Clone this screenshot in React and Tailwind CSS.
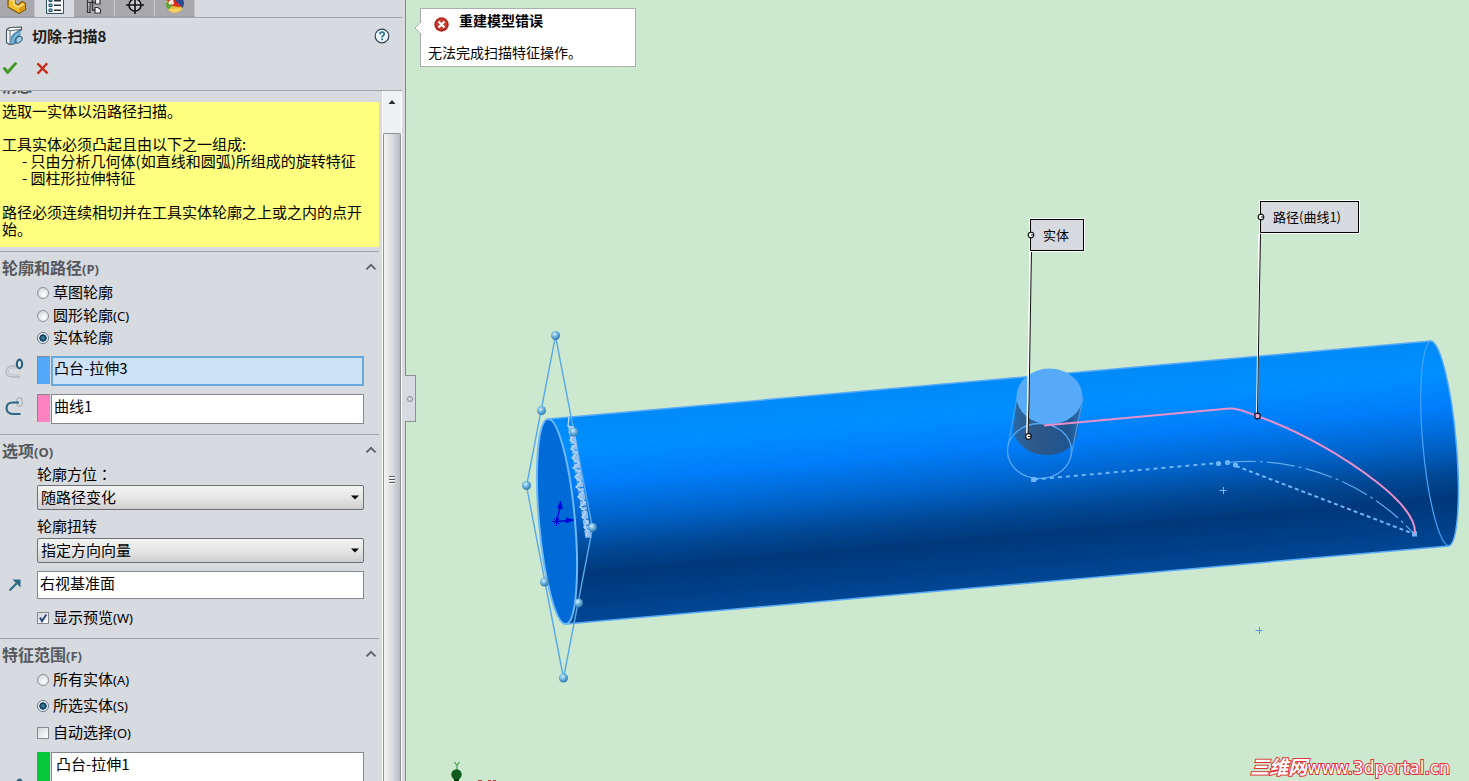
import React from "react";

const UI_FONT = "font-['Noto_Sans_CJK_SC',sans-serif]";

/* ---------- icons ---------- */

function PartIcon() {
  return (
    <svg width="20" height="15" viewBox="0 0 20 15" aria-hidden="true">
      <path d="M1 0 H8 V3.5 L11 5 L15 1.5 L18.5 3.5 V9.5 L12 13.5 L1 7 Z" fill="#f3bd2c" stroke="#7c560c" strokeWidth="1.2" strokeLinejoin="round" />
      <path d="M2.5 0 H7 V4.5 L11.5 7 L17 4" fill="none" stroke="#ffe89a" strokeWidth="1.4" />
      <path d="M12 8 L18 4.5 V9.2 L12 13 Z" fill="#dc9c17" />
    </svg>
  );
}

function PropertyIcon() {
  return (
    <svg width="18" height="15" viewBox="0 0 18 15" aria-hidden="true">
      <path d="M0.5 0 V13.5 H17.5 V0" fill="#fbfdfe" stroke="#2f4f63" />
      <path d="M3 0 h3 v1.5 h-3z M3 4 h3 v2.5 h-3z M3 9 h3 v2.5 h-3z" fill="#7fd0e6" stroke="#1d4658" strokeWidth="1" />
      <path d="M8 0.8 H15 M8 5.2 H15 M8 10.2 H15" stroke="#24343f" strokeWidth="1.5" />
    </svg>
  );
}

function ConfigIcon() {
  return (
    <svg width="16" height="15" viewBox="0 0 16 15" aria-hidden="true">
      <path d="M1.5 0 V2.5 H4 V12.500 H1.500 V10 M1.500 2.500 V12.500 H5" fill="#e4e4e7" stroke="#37373b" strokeWidth="1.200" />
      <path d="M4 2.500 H9 M6.500 0 V10 H9" fill="none" stroke="#37373b" strokeWidth="1.400" />
      <path d="M9.500 0 V4 H14 V0" fill="#f4f4f6" stroke="#37373b" strokeWidth="1.200" />
      <path d="M9 7.500 H12 L14.500 9.500 V13 H9 Z" fill="#f4f4f6" stroke="#37373b" strokeWidth="1.200" />
    </svg>
  );
}

function TargetIcon() {
  return (
    <svg width="20" height="15" viewBox="0 0 20 15" aria-hidden="true">
      <circle cx="10" cy="5" r="6" fill="#c9c9cd" stroke="#111" strokeWidth="1.6" />
      <path d="M1 5 H19 M10 0 V14" stroke="#111" strokeWidth="1.6" />
    </svg>
  );
}

function AppearanceIcon() {
  return (
    <svg width="20" height="15" viewBox="0 0 20 15" aria-hidden="true">
      <circle cx="10" cy="4" r="9" fill="#e9b934" />
      <path d="M10 4 L1.5 1 A9 9 0 0 1 10 -5 Z" fill="#4c9b36" />
      <path d="M10 4 L1.2 2 A9 9 0 0 0 3 9.5 Z" fill="#58a53d" />
      <path d="M3 0 L11 0 L16 7 Q9 7 4 4 Z" fill="#d92a1d" />
      <path d="M10 0 H18.4 A9 9 0 0 1 17.5 8 Z" fill="#2b4a94" />
      <path d="M4 1 L8 -1 L9 4 Q6 5 3.5 4 Z" fill="#fbe6e0" />
      <path d="M3 9.5 Q10 8 17 8.5 A9 9 0 0 1 3 9.5" fill="#f3d269" />
    </svg>
  );
}

function SweepCutIcon() {
  return (
    <svg width="18" height="20" viewBox="0 0 18 20" aria-hidden="true">
      <path d="M1.500 3.500 L5 1.500 L16.500 1 V4 L13 5 V10 L9 18 L4.500 18.500 L1.500 16.500 Z" fill="#f3f6f8" stroke="#44525c" strokeWidth="1.100" strokeLinejoin="round" />
      <path d="M1.500 3.500 L5 4.800 L16.500 3.500 M5 4.800 V18" fill="none" stroke="#5c6a74" strokeWidth="1" />
      <path d="M5.500 18 V13 Q6.500 6 15.500 4.500 V9 L11 12.500 V18 Z" fill="#4b8fb8" />
      <path d="M7.500 17 Q8 9.500 15 7" fill="none" stroke="#8cc3df" strokeWidth="1.800" />
      <path d="M11 12.500 L14 10.200 L17 11 V14.500 L13.500 17 H11 Z" fill="#a5cfe4" stroke="#2a5672" strokeWidth="1" strokeLinejoin="round" />
    </svg>
  );
}

function HelpIcon() {
  return (
    <svg width="16" height="16" viewBox="0 0 16 16" aria-hidden="true">
      <circle cx="8" cy="8" r="6.8" fill="#eaf4f8" stroke="#33424c" strokeWidth="1.2" />
      <path d="M5.9 6.2 Q6 4.2 8.1 4.2 Q10.2 4.2 10.2 6 Q10.2 7 9 7.7 Q8.1 8.3 8.1 9.4" fill="none" stroke="#2f7391" strokeWidth="1.7" />
      <rect x="7.2" y="10.4" width="1.8" height="1.8" fill="#2f7391" />
    </svg>
  );
}

function CheckIcon() {
  return (
    <svg width="16" height="14" viewBox="0 0 16 14" aria-hidden="true">
      <path d="M1 7.6 L3 6.2 L5.8 9.4 L13 1.4 L15 2.4 L6.2 12.6 H5 Z" fill="#3f9e1e" stroke="#2d7d14" strokeWidth="0.6" />
    </svg>
  );
}

function CancelIcon() {
  return (
    <svg width="13" height="13" viewBox="0 0 13 13" aria-hidden="true">
      <path d="M1.4 1.4 L11.6 11.4 M11.2 1.2 L1.6 11.8" stroke="#c4301c" strokeWidth="2.400" />
    </svg>
  );
}

function ChevronUp() {
  return (
    <svg width="12" height="8" viewBox="0 0 12 8" aria-hidden="true">
      <path d="M1.5 6.3 L6 1.8 L10.5 6.3" fill="none" stroke="#5c6064" strokeWidth="1.8" />
    </svg>
  );
}

function ProfileIcon() {
  return (
    <svg width="20" height="22" viewBox="0 0 20 22" aria-hidden="true">
      <path d="M13 10 H8 C3.500 10 1 12.500 1 15.500 C1 19 4 21 8 21 H15" fill="none" stroke="#b2b6bb" strokeWidth="1.300" />
      <path d="M14 12 H8 C5 12 3.200 13.500 3.200 15.500 C3.200 17.800 5 19 8 19 H15" fill="none" stroke="#bfc3c8" strokeWidth="1" />
      <ellipse cx="14.500" cy="8" rx="2.600" ry="4.300" fill="#dcecf2" stroke="#2b6078" strokeWidth="2.200" />
    </svg>
  );
}

function PathIcon() {
  return (
    <svg width="20" height="22" viewBox="0 0 20 22" aria-hidden="true">
      <ellipse cx="14.500" cy="8" rx="2.800" ry="4.300" fill="none" stroke="#b4b9be" strokeWidth="1.500" />
      <path d="M14 8.500 H8 C3.800 8.500 1.500 11 1.500 14 C1.500 17.500 4 20 8 20 H15.500" fill="none" stroke="#2b6780" strokeWidth="2.200" />
    </svg>
  );
}

function DirectionIcon() {
  return (
    <svg width="14" height="14" viewBox="0 0 14 14" aria-hidden="true">
      <path d="M1.500 12.500 L8.500 5.500" stroke="#2b6a82" strokeWidth="2.200" />
      <path d="M4.500 1.500 H12.500 V9.500 Z" fill="#2b6a82" />
    </svg>
  );
}

/* ---------- panel parts ---------- */

function Latin({ children }) {
  return <span className="font-['Noto_Sans',sans-serif] text-[13px] leading-none">{children}</span>;
}

function Tab({ label, active, className, children }) {
  return (
    <button
      type="button"
      aria-label={label}
      className={`flex h-full items-start justify-center ${active ? "bg-[#d7dadf]" : "border-r border-b border-r-[#c6c6ca] border-b-[#9b9ea3] bg-[#a9a9ad]"} ${className}`}
    >
      {children}
    </button>
  );
}

function Section({ title, hotkey, className, children }) {
  return (
    <section className="border-t border-[#9fa2a7]">
      <h2 className="pb-[2px] text-[16px] leading-7 font-bold text-[#55585c]">
        <button type="button" className="flex h-7 w-full items-center justify-between pt-px pr-[2px] pl-[2px]">
          <span>
            {title}
            <span className="font-['Noto_Sans',sans-serif] text-[13px] leading-none">({hotkey})</span>
          </span>
          <ChevronUp />
        </button>
      </h2>
      <div className={`pr-[15px] pl-[37px] ${className}`}>{children}</div>
    </section>
  );
}

function Radio({ name, text, hotkey, checked, className }) {
  return (
    <label className={`flex items-center gap-1 text-[15px] ${className}`}>
      <input
        type="radio"
        name={name}
        defaultChecked={checked}
        className="size-3 shrink-0 appearance-none rounded-full border border-[#8b8f94] bg-[radial-gradient(circle_at_60%_65%,#ffffff_0,#e0e2e5_60%,#c0c4ca_100%)] checked:border-[#64798a] checked:bg-[radial-gradient(circle,#4f9ec0_0,#123f5c_38%,#123f5c_48%,#eef3f6_56%)]"
      />
      <span className="pb-px">
        {text}
        {hotkey && <Latin>({hotkey})</Latin>}
      </span>
    </label>
  );
}

function Check({ text, hotkey, checked, className }) {
  return (
    <label className={`flex items-center gap-1 text-[15px] ${className}`}>
      <span className="relative flex size-3 shrink-0">
        <input
          type="checkbox"
          defaultChecked={checked}
          className="peer size-3 appearance-none border border-[#85898e] bg-linear-to-br from-[#d4d7da] to-white"
        />
        <svg className="pointer-events-none absolute inset-0 hidden peer-checked:block" width="12" height="12" viewBox="0 0 12 12" aria-hidden="true">
          <path d="M3 5.500 L5 9 L9.300 2.500" fill="none" stroke="#33477c" strokeWidth="2" />
        </svg>
      </span>
      <span className="pb-px">
        {text}
        <Latin>({hotkey})</Latin>
      </span>
    </label>
  );
}

function Picker({ label, value, icon, swatch, active }) {
  return (
    <div className="-ml-8 flex items-start">
      <span className="w-8 shrink-0">{icon}</span>
      <span className={`h-7 w-[13px] shrink-0 border-t border-l border-[#85898e] ${swatch}`} />
      <input
        aria-label={label}
        defaultValue={value}
        className={`ml-px h-[30px] min-w-0 flex-1 text-[15px] text-black outline-none ${active ? "border-2 border-[#66a9dc] bg-[#cde2f7] pb-[7px] pl-px" : "border border-[#85898e] bg-white pb-[7px] pl-[2px]"}`}
      />
    </div>
  );
}

function Combo({ id, label, value, className }) {
  return (
    <div>
      <label htmlFor={id} className={`block text-[15px] ${className}`}>
        {label}
      </label>
      <div className="relative">
        <select
          id={id}
          defaultValue={value}
          className="block h-[25px] w-full appearance-none rounded-[2px] border border-[#6d7074] bg-linear-to-b from-[#f3f3f3] via-[#e6e6e7] to-[#cfcfd1] pb-[2px] pl-[3px] text-[15px] leading-[21px] text-black"
        >
          <option>{value}</option>
        </select>
        <svg className="pointer-events-none absolute top-[10px] right-[5px]" width="8" height="5" viewBox="0 0 8 5" aria-hidden="true">
          <path d="M0 0.500 H8 L4 4.500 Z" fill="#000" />
        </svg>
      </div>
    </div>
  );
}

function ScrollBar() {
  return (
    <div className="flex w-5 shrink-0 flex-col border-x border-white bg-[#eef0f1]" aria-hidden="true">
      <div className="flex h-[42px] justify-center pt-[9px]">
        <svg width="8" height="4" viewBox="0 0 8 4">
          <path d="M0.500 4 L4 0 L7.500 4 Z" fill="#2b2b2b" />
        </svg>
      </div>
      <div className="flex flex-1 flex-col items-center rounded-t-[2px] border border-b-0 border-[#8d9094] bg-linear-to-r from-[#f4f4f5] via-[#dcdde0] to-[#b9bbc1]">
        <div className="mt-[342px] flex flex-col gap-px">
          <span className="block h-[2px] w-[6px] border-t border-[#55585c] bg-white" />
          <span className="block h-[2px] w-[6px] border-t border-[#55585c] bg-white" />
          <span className="block h-[2px] w-[6px] border-t border-[#55585c] bg-white" />
        </div>
      </div>
    </div>
  );
}

function PropertyPanel() {
  return (
    <aside className="flex w-[406px] shrink-0 flex-col overflow-hidden border-r border-[#84898e] bg-[#d7dadf] pr-[3px] text-black">
      <nav className="flex h-[18px] shrink-0 border-b border-[#a0a3a8]">
        <Tab label="特征树" className="w-[35px]"><PartIcon /></Tab>
        <Tab label="属性" active className="w-[39px]"><PropertyIcon /></Tab>
        <Tab label="配置" className="w-[41px]"><ConfigIcon /></Tab>
        <Tab label="尺寸专家" className="w-[40px]"><TargetIcon /></Tab>
        <Tab label="外观" className="w-[40px]"><AppearanceIcon /></Tab>
      </nav>

      <header className="h-[73px] shrink-0 border-b border-[#a0a3a8]">
        <div className="flex h-9 items-center pr-3 pl-[5px]">
          <SweepCutIcon />
          <h1 className="ml-[9px] flex-1 text-[15px] leading-5 font-bold text-[#1c1e20]">切除-扫描8</h1>
          <button type="button" aria-label="帮助"><HelpIcon /></button>
        </div>
        <div className="flex h-7 items-center gap-[18px] pl-[2px]">
          <button type="button" aria-label="确定"><CheckIcon /></button>
          <button type="button" aria-label="取消"><CancelIcon /></button>
        </div>
      </header>

      <div className="flex min-h-0 flex-1">
        <div className="min-w-0 flex-1 overflow-hidden pr-[3px]">
          <h2 className="-mt-[14px] h-[25px] pl-[2px] text-[15px] leading-[18px] font-bold text-[#4d5054]">消息</h2>
          <div className="mb-1 h-[145px] bg-[#ffff80] pl-[2px] text-[15px] leading-[17px]">
            <p>选取一实体以沿路径扫描。</p>
            <p className="mt-4">工具实体必须凸起且由以下之一组成:</p>
            <ul className="pl-5">
              <li>- 只由分析几何体(如直线和圆弧)所组成的旋转特征</li>
              <li>- 圆柱形拉伸特征</li>
            </ul>
            <p className="mt-[17px] pr-3">路径必须连续相切并在工具实体轮廓之上或之内的点开始。</p>
          </div>

          <Section title="轮廓和路径" hotkey="P" className="pb-[10px]">
            <div className="pb-[7px]">
              <Radio name="profile" text="草图轮廓" className="h-[22px]" />
              <Radio name="profile" text="圆形轮廓" hotkey="C" className="h-[23px]" />
              <Radio name="profile" text="实体轮廓" checked className="h-[22px]" />
            </div>
            <div className="flex flex-col gap-2">
              <Picker label="工具实体" value="凸台-拉伸3" icon={<ProfileIcon />} swatch="bg-[#55a9fb]" active />
              <Picker label="路径" value="曲线1" icon={<PathIcon />} swatch="bg-[#fb82bf]" />
            </div>
          </Section>

          <Section title="选项" hotkey="O" className="pb-[8px]">
            <Combo
              id="orientation"
              label={<>轮廓方位<span className="font-['Noto_Sans_CJK_TC',sans-serif] leading-none">：</span></>}
              value="随路径变化"
              className="h-5 leading-[18px]"
            />
            <Combo id="twist" label="轮廓扭转" value="指定方向向量" className="h-7 pt-1 leading-[23px]" />
            <div className="mt-2 -ml-8 flex items-center">
              <span className="w-8 shrink-0 pl-[3px]"><DirectionIcon /></span>
              <input
                aria-label="方向向量"
                defaultValue="右视基准面"
                className="h-7 min-w-0 flex-1 border border-[#85898e] bg-white pb-[6px] pl-[2px] text-[15px] text-black outline-none"
              />
            </div>
            <Check text="显示预览" hotkey="W" checked className="mt-[7px] h-6" />
          </Section>

          <Section title="特征范围" hotkey="F">
            <Radio name="scope" text="所有实体" hotkey="A" className="h-[22px]" />
            <Radio name="scope" text="所选实体" hotkey="S" checked className="h-[30px]" />
            <Check text="自动选择" hotkey="O" className="h-6" />
            <div className="mt-[7px] -ml-8 flex">
              <span className="w-8 shrink-0 pt-6"><ProfileIcon /></span>
              <span className="w-[13px] shrink-0 bg-[#06c93a]" />
              <textarea
                aria-label="受影响的实体"
                defaultValue="凸台-拉伸1"
                className="ml-px h-24 min-w-0 flex-1 resize-none border border-[#85898e] bg-white pl-1 text-[15px] leading-[21px] text-black outline-none"
              />
            </div>
          </Section>
        </div>
        <ScrollBar />
      </div>
    </aside>
  );
}

/* ---------- model view ---------- */

const HANDLES = [
  [555.5, 335.5], [541.5, 410.5], [526.5, 485.5], [544.5, 582],
  [563.5, 678], [578.5, 603], [592.5, 527.5], [574, 432],
];

function Model() {
  return (
    <svg className="absolute inset-0 h-full w-full" role="img" aria-label="圆管模型">
      <defs>
        <linearGradient id="tube" gradientUnits="userSpaceOnUse" x1="548" y1="419" x2="566" y2="624">
          <stop offset="0" stopColor="#008af8" />
          <stop offset="0.150" stopColor="#008fff" />
          <stop offset="0.320" stopColor="#007efb" />
          <stop offset="0.500" stopColor="#0064cb" />
          <stop offset="0.650" stopColor="#004896" />
          <stop offset="0.765" stopColor="#00387a" />
          <stop offset="0.880" stopColor="#003e86" />
          <stop offset="1" stopColor="#004794" />
        </linearGradient>
        <linearGradient id="boss" x1="0" x2="1" y1="0" y2="0">
          <stop offset="0" stopColor="#2b68a4" />
          <stop offset="0.350" stopColor="#2d5787" />
          <stop offset="0.800" stopColor="#1f5590" />
          <stop offset="1" stopColor="#2f73b4" />
        </linearGradient>
        <radialGradient id="ball" cx="0.400" cy="0.350" r="0.650">
          <stop offset="0" stopColor="#d6f1ff" />
          <stop offset="0.450" stopColor="#72b8e2" />
          <stop offset="1" stopColor="#2f78ad" />
        </radialGradient>
      </defs>
      <g transform="translate(-406 0)">
        <path d="M548 419 L1431 341 A17 103 -5 0 1 1449 546 L566 624 A18 103 -5 0 1 548 419 Z" fill="url(#tube)" stroke="#59aaf6" strokeWidth="1.5" />
        <path d="M1431 341 A18 103 -5 0 0 1449 546" fill="none" stroke="#4ba3fa" strokeWidth="1.2" />
        <ellipse cx="557" cy="521.5" rx="18" ry="103" transform="rotate(-5 557 521.5)" fill="#006ad6" stroke="#6cb8fb" strokeWidth="2" />

        <path d="M555.500 336 L526.500 486 L563.500 678 L592.500 528 Z" fill="none" stroke="#5aa8e8" strokeWidth="1.4" />
        <path d="M571 426 L588.500 538" stroke="#8fbeee" strokeWidth="6" strokeDasharray="5 1 3 1 8 1" fill="none" />
        <path d="M569 417 l-1 9 l5 2 l-4 4 l5 3 l-4 5 l6 4 l-5 5 l6 4 l-5 5 l7 5 l-6 5 l7 4 l-5 5 l6 5 l-5 5 l7 5 l-5 5 l7 5 l-5 5 l6 5 l-4 5 l6 5 l-4 5 l4 4 l-2 5" fill="none" stroke="#b5d5f6" strokeWidth="1.400" />

        <g stroke="#0000d8" strokeWidth="1.3" fill="#0000d8">
          <path d="M552 521.500 h9 M556.500 517 v9 M553.500 518.500 l6 6 M559.500 518.500 l-6 6" fill="none" strokeWidth="1" />
          <path d="M557 521.500 L568 520.500 M557 521 L560 507" fill="none" />
          <path d="M566 518 L574 520 L566 523 Z M557.500 508 L560.500 501 L562.500 509 Z" strokeWidth="0.500" />
        </g>

        {HANDLES.map(([x, y]) => (
          <circle key={`${x}-${y}`} cx={x} cy={y} r="4.5" fill="url(#ball)" />
        ))}

        <path d="M1017 397 L1013 432 C1018 447 1031 455 1048 455 C1062 455 1073 447 1077 437 L1083 397 Z" fill="url(#boss)" />
        <path d="M1017 398 L1008 446 M1083 398 L1071 456" stroke="#4e9fec" strokeWidth="1.200" fill="none" />
        <ellipse cx="1049.5" cy="396.500" rx="33" ry="28" fill="#57aaf8" />
        <ellipse cx="1039.500" cy="451" rx="32" ry="27.500" fill="none" stroke="#56a8f5" strokeWidth="1.300" />

        <path d="M1034 479.500 L1218 463" stroke="#6db6fa" strokeWidth="2" strokeDasharray="4 4" fill="none" />
        <path d="M1236 466 L1414 534" stroke="#6db6fa" strokeWidth="2" strokeDasharray="4 3" fill="none" />
        <path d="M1228 462.500 C1290 456 1364 478 1414 534" stroke="#62a9ec" strokeWidth="1.200" strokeDasharray="28 4 3 4" fill="none" />
        <path d="M1031 477 h5 v5 h-5z M1412 531.500 h5 v5 h-5z" fill="#6db6fa" />
        <circle cx="1218.500" cy="463.500" r="2.600" fill="#6db6fa" />
        <circle cx="1227.500" cy="462.500" r="2.600" fill="#6db6fa" />
        <circle cx="1235.500" cy="465" r="2.600" fill="#6db6fa" />
        <path d="M1219.500 490.500 h7 M1223.500 487 v7" stroke="#7dbaf2" fill="none" />
        <path d="M1255.500 630.500 h7 M1259.500 627 v7" stroke="#4c9fdf" fill="none" />

        <path d="M1044 425.500 L1229 408.500 C1240 408 1248 413 1257 416 C1300 431 1345 457 1378 483 C1402 502 1416 520 1415 534" stroke="#e890cc" strokeWidth="2" fill="none" />

        <g fill="none">
          <path d="M1030 252 L1030 277 L1029 340 L1028 402 L1027 436" stroke="#fff" strokeWidth="2" />
          <path d="M1031.500 252 L1031 277 L1030 340 L1029 402 L1028 436" stroke="#111" strokeWidth="1" />
          <path d="M1259 234 L1259 287 L1258 350 L1257 415" stroke="#fff" strokeWidth="2" />
          <path d="M1260.500 234 L1259.500 287 L1258.500 350 L1257.500 415" stroke="#111" strokeWidth="1" />
        </g>
        <circle cx="1028.500" cy="436.500" r="2.800" fill="#fff" stroke="#111" strokeWidth="1.200" />
        <path d="M1028 436.500 h3" stroke="#111" />
        <circle cx="1257.500" cy="416" r="2.800" fill="#e7a8d4" stroke="#111" strokeWidth="1.200" />

        <path d="M457 770 V765 M454.500 762 L457 765.500 L459.500 762" fill="none" stroke="#4d9a52" strokeWidth="1.200" />
        <circle cx="456.500" cy="774.500" r="5.200" fill="#0f5a1d" />
        <path d="M454 779 h5 v2 h-5z" fill="#093d12" />
        <path d="M478 780.500 h4 M488 780.500 h3 M493 780.500 h3" stroke="#b93a2a" />
      </g>
    </svg>
  );
}

function Callout({ text, className }) {
  return (
    <div className={`absolute flex h-8 items-center border border-black bg-[#d7dadf] pl-3 text-[13px] outline outline-white ${className}`}>
      <svg className="absolute top-[11px] -left-[4px]" width="8" height="8" viewBox="0 0 8 8" aria-hidden="true">
        <circle cx="4" cy="4" r="2.800" fill="#fff" stroke="#111" strokeWidth="1.200" />
        <path d="M4 4 H6.500" stroke="#111" />
      </svg>
      {text}
    </div>
  );
}

function ErrorBalloon() {
  return (
    <div role="alert" className="absolute top-2 left-[14px] h-[59px] w-[216px] border border-[#a9adab] bg-white pl-[7px] text-black">
      <svg className="absolute top-[12px] -left-[7px]" width="8" height="14" viewBox="0 0 8 14" aria-hidden="true">
        <path d="M8 0 L1 7 L8 14 Z" fill="#fff" />
        <path d="M7.500 0.500 L1 7 L7.500 13.500" fill="none" stroke="#a9adab" />
      </svg>
      <div className="flex h-7 items-start gap-[10px] pl-[6px]">
        <svg className="mt-2" width="15" height="15" viewBox="0 0 15 15" aria-hidden="true">
          <circle cx="7.500" cy="7.500" r="7.200" fill="#a8231a" />
          <circle cx="7.500" cy="7" r="5.800" fill="#c93c2c" />
          <path d="M4.500 4.500 L10.500 10.500 M10.500 4.500 L4.500 10.500" stroke="#fff" strokeWidth="2.200" />
        </svg>
        <strong className="pt-px text-[14px] leading-5">重建模型错误</strong>
      </div>
      <p className="pt-[5px] text-[14px] leading-5">无法完成扫描特征操作。</p>
    </div>
  );
}

export default function App() {
  return (
    <div className={`flex h-screen overflow-hidden ${UI_FONT}`}>
      <PropertyPanel />
      <main className="relative min-w-0 flex-1 bg-[#cce8cf]">
        <Model />
        <button
          type="button"
          aria-label="折叠面板"
          className="absolute top-[375px] -left-[1px] flex h-[47px] w-[11px] items-center justify-center border border-l-0 border-[#8b9095] bg-[#d7dadf]"
        >
          <span className="size-[6px] rounded-full border border-[#85898e]" />
        </button>
        <ErrorBalloon />
        <Callout text="实体" className="top-[219px] left-[624px] w-[54px]" />
        <Callout text="路径(曲线1)" className="top-[201px] left-[854px] w-[99px]" />
        <a
          href="#portal"
          className="absolute right-[19px] bottom-0 flex items-baseline font-['DejaVu_Sans','Noto_Sans_CJK_SC',sans-serif] text-[17px] leading-[26px] text-white [-webkit-text-stroke:2px_#dc3434] [paint-order:stroke_fill]"
        >
          <span className="text-[19px] font-bold italic">三维网</span>
          www.3dportal.cn
        </a>
      </main>
    </div>
  );
}
